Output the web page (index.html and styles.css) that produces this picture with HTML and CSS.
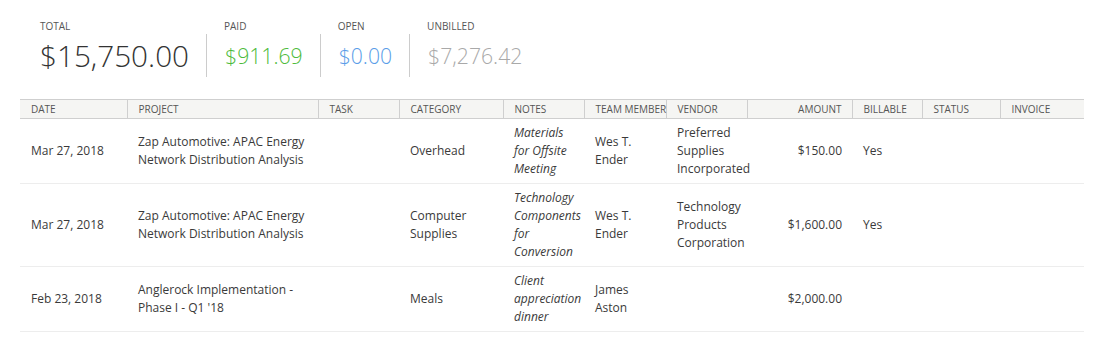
FILE: index.html
```html
<!DOCTYPE html>
<html>
<head>
<meta charset="utf-8">
<link rel="stylesheet" href="styles.css">
</head>
<body>
<div class="page">
  <div class="summary">
    <div class="stat first">
      <div class="stat-label">Total</div>
      <div class="stat-value total">$15,750.00</div>
    </div>
    <div class="stat">
      <div class="stat-label">Paid</div>
      <div class="stat-value paid">$911.69</div>
    </div>
    <div class="stat">
      <div class="stat-label">Open</div>
      <div class="stat-value open">$0.00</div>
    </div>
    <div class="stat">
      <div class="stat-label">Unbilled</div>
      <div class="stat-value unbilled">$7,276.42</div>
    </div>
  </div>

  <table class="expenses">
    <colgroup>
      <col class="c-date"><col class="c-project"><col class="c-task"><col class="c-category"><col class="c-notes"><col class="c-member"><col class="c-vendor"><col class="c-amount"><col class="c-billable"><col class="c-status"><col class="c-invoice">
    </colgroup>
    <thead>
      <tr>
        <th>Date</th><th>Project</th><th>Task</th><th>Category</th><th>Notes</th><th>Team Member</th><th>Vendor</th><th class="num">Amount</th><th>Billable</th><th>Status</th><th class="last">Invoice</th>
      </tr>
    </thead>
    <tbody>
      <tr>
        <td>Mar 27, 2018</td>
        <td>Zap Automotive: APAC Energy Network Distribution Analysis</td>
        <td></td>
        <td>Overhead</td>
        <td class="notes">Materials for Offsite Meeting</td>
        <td>Wes T. Ender</td>
        <td>Preferred Supplies Incorporated</td>
        <td class="num">$150.00</td>
        <td>Yes</td>
        <td></td>
        <td></td>
      </tr>
      <tr>
        <td>Mar 27, 2018</td>
        <td>Zap Automotive: APAC Energy Network Distribution Analysis</td>
        <td></td>
        <td>Computer Supplies</td>
        <td class="notes">Technology Components for Conversion</td>
        <td>Wes T. Ender</td>
        <td>Technology Products Corporation</td>
        <td class="num">$1,600.00</td>
        <td>Yes</td>
        <td></td>
        <td></td>
      </tr>
      <tr>
        <td>Feb 23, 2018</td>
        <td>Anglerock Implementation - Phase I - Q1 '18</td>
        <td></td>
        <td>Meals</td>
        <td class="notes">Client appreciation dinner</td>
        <td>James Aston</td>
        <td></td>
        <td class="num">$2,000.00</td>
        <td></td>
        <td></td>
        <td></td>
      </tr>
    </tbody>
  </table>
</div>
</body>
</html>
```

FILE: styles.css
```css
html, body {
  margin: 0;
  padding: 0;
  background: #ffffff;
}

body {
  font-family: "Open Sans", "Liberation Sans", sans-serif;
  color: #3a3a3a;
}

.page {
  padding: 18px 21px 0 20px;
}

.summary {
  display: flex;
  padding-left: 20px;
}

.stat {
  display: flex;
  flex-direction: column;
}

.stat-label {
  font-size: 10px;
  line-height: 16px;
  text-transform: uppercase;
  color: #555555;
  padding: 0 17px 0 18px;
}

.stat-value {
  height: 43px;
  display: flex;
  align-items: center;
  padding: 0 17px 0 18px;
  border-left: 1px solid #cccccc;
  font-weight: 300;
  font-size: 21.2px;
  white-space: nowrap;
}

.stat.first .stat-label,
.stat.first .stat-value {
  padding-left: 0;
  border-left: none;
}

.stat-value.total {
  font-size: 29.7px;
  color: #333333;
  padding-bottom: 1px;
}

.stat-value.paid { color: #4dbb3b; }
.stat-value.open { color: #5a9de8; }
.stat-value.unbilled { color: #a9a9a9; }

.expenses {
  margin-top: 21px;
  width: 1064px;
  border-collapse: collapse;
  table-layout: fixed;
}

.c-date { width: 107px; }
.c-project { width: 191px; }
.c-task { width: 81px; }
.c-category { width: 104px; }
.c-notes { width: 81px; }
.c-member { width: 82px; }
.c-vendor { width: 81px; }
.c-amount { width: 105px; }
.c-billable { width: 70px; }
.c-status { width: 78px; }
.c-invoice { width: 84px; }

.expenses th {
  background: #f5f5f3;
  border-top: 1px solid #cfcfcf;
  border-bottom: 1px solid #cfcfcf;
  border-right: 1px solid #cfcfcf;
  font-size: 10px;
  font-weight: 400;
  line-height: 18px;
  text-transform: uppercase;
  color: #555555;
  text-align: left;
  padding: 0 0 0 11px;
  white-space: nowrap;
}

.expenses th.last {
  border-right: none;
}

.expenses th.num,
.expenses td.num {
  text-align: right;
  padding-right: 10px;
}

.expenses td {
  font-size: 12px;
  line-height: 18px;
  color: #3a3a3a;
  padding: 5px 6px 5px 11px;
  vertical-align: middle;
  border-bottom: 1px solid #ededed;
}

.expenses td.notes {
  font-style: italic;
}
```
